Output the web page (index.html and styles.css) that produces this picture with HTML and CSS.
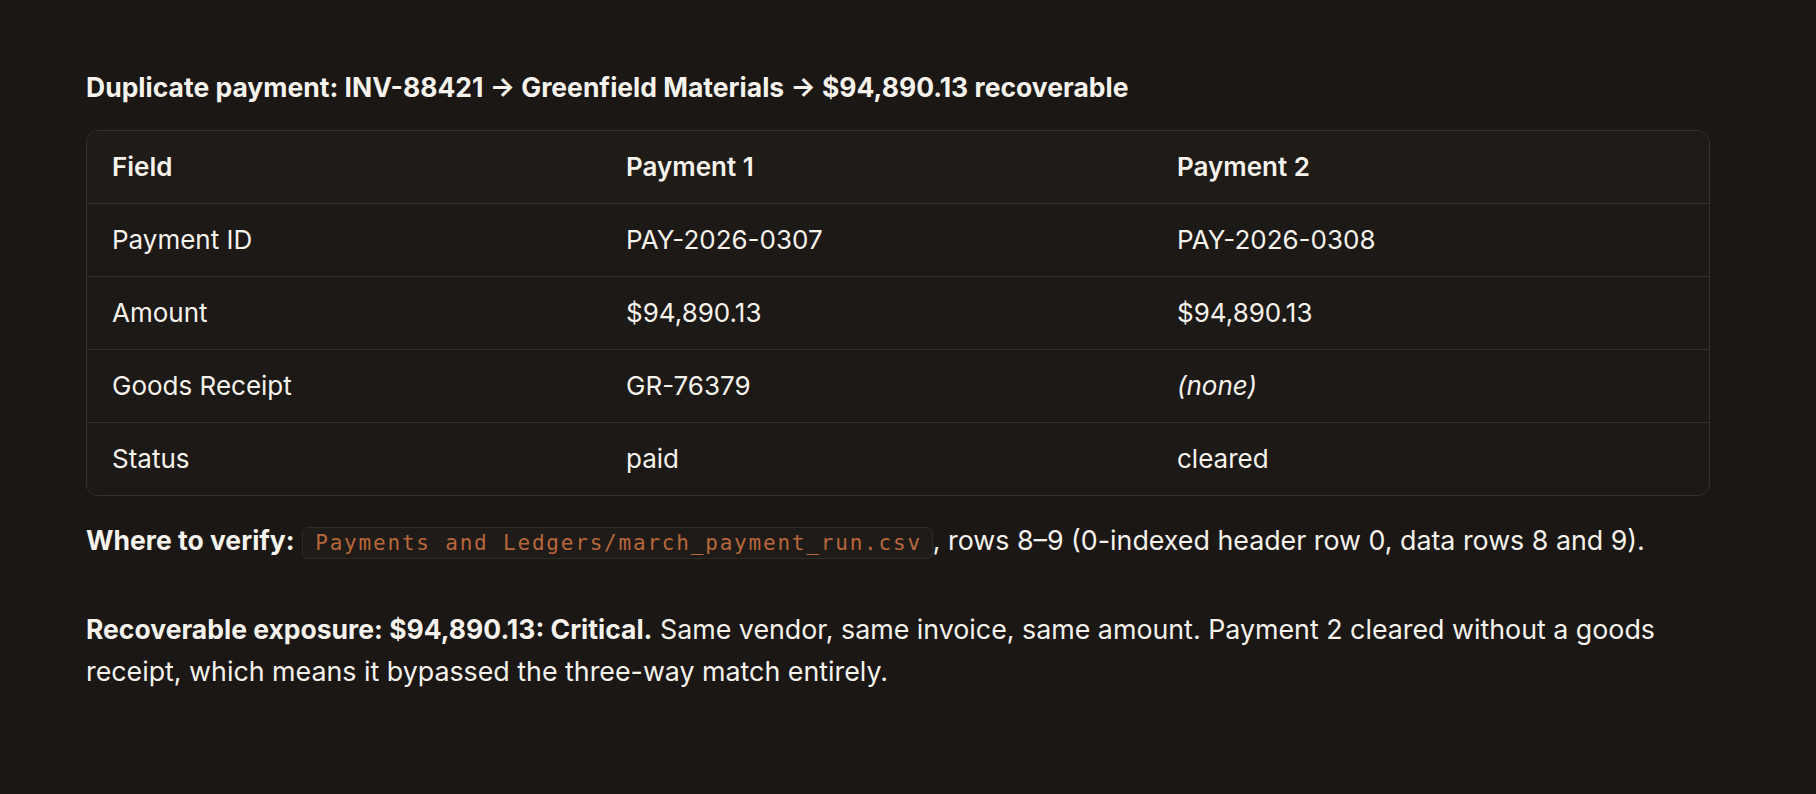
FILE: index.html
```html
<!DOCTYPE html>
<html lang="en">
<head>
    <meta charset="UTF-8">
    <meta name="viewport" content="width=device-width, initial-scale=1.0">
    <title>Duplicate payment finding</title>
    <link rel="stylesheet" href="styles.css">
</head>
<body>
    <div class="finding">
        <h3 class="finding-title">Duplicate payment: INV-88421 → Greenfield Materials → $94,890.13 recoverable</h3>

        <div class="table-wrap">
            <table class="compare-table">
                <colgroup>
                    <col class="col-field">
                    <col class="col-pay1">
                    <col class="col-pay2">
                </colgroup>
                <thead>
                    <tr>
                        <th>Field</th>
                        <th>Payment 1</th>
                        <th>Payment 2</th>
                    </tr>
                </thead>
                <tbody>
                    <tr>
                        <td>Payment ID</td>
                        <td>PAY-2026-0307</td>
                        <td>PAY-2026-0308</td>
                    </tr>
                    <tr>
                        <td>Amount</td>
                        <td>$94,890.13</td>
                        <td>$94,890.13</td>
                    </tr>
                    <tr>
                        <td>Goods Receipt</td>
                        <td>GR-76379</td>
                        <td><em>(none)</em></td>
                    </tr>
                    <tr>
                        <td>Status</td>
                        <td>paid</td>
                        <td>cleared</td>
                    </tr>
                </tbody>
            </table>
        </div>

        <p class="verify"><strong>Where to verify:</strong> <code>Payments and Ledgers/march_payment_run.csv</code>, rows 8–9 (0-indexed header row 0, data rows 8 and 9).</p>

        <p class="exposure"><strong>Recoverable exposure: $94,890.13: Critical.</strong> Same vendor, same invoice, same amount. Payment 2 cleared without a goods receipt, which means it bypassed the three-way match entirely.</p>
    </div>
</body>
</html>
```

FILE: styles.css
```css
:root {
    --page-bg: #1a1714;
    --head-bg: #1f1c18;
    --row-bg: #1c1916;
    --line-color: #36312b;
    --text-color: #f6f2ec;
    --code-color: #b8673a;
    --code-bg: #1e1b18;
    --code-border: #2f2b27;
}

*,
*::before,
*::after {
    margin: 0;
    padding: 0;
    box-sizing: border-box;
}

body {
    font-family: Inter, "Noto Sans", sans-serif;
    background-color: var(--page-bg);
    color: var(--text-color);
    font-size: 26px;
    line-height: 42px;
    -webkit-font-smoothing: antialiased;
}

.finding {
    width: 1624px;
    margin-left: 86px;
    padding-top: 66px;
}

.finding-title {
    font-size: 26.5px;
    font-weight: 700;
    line-height: 42px;
    margin-bottom: 22px;
}

.table-wrap {
    border: 1px solid var(--line-color);
    border-radius: 12px;
    overflow: hidden;
    background-color: var(--row-bg);
}

.compare-table {
    width: 100%;
    border-collapse: collapse;
    table-layout: fixed;
}

.col-field { width: 514px; }
.col-pay1 { width: 551px; }

.compare-table th,
.compare-table td {
    text-align: left;
    padding: 18px 25px;
    line-height: 36px;
}

.compare-table th {
    font-weight: 600;
    background-color: var(--head-bg);
}

.compare-table tr + tr td,
.compare-table tbody tr:first-child td {
    border-top: 1px solid var(--line-color);
}

.compare-table em {
    font-style: italic;
}

.verify,
.exposure {
    font-size: 26.8px;
}

.verify strong,
.exposure strong {
    font-size: 26.5px;
    font-weight: 700;
}

.verify {
    margin-top: 23px;
}

.verify code {
    font-family: "DejaVu Sans Mono", monospace;
    font-size: 21px;
    letter-spacing: 1.8px;
    color: var(--code-color);
    background-color: var(--code-bg);
    border: 1px solid var(--code-border);
    border-radius: 6px;
    padding: 3px 10px 3px 12px;
}

.exposure {
    margin-top: 44px;
}
```
